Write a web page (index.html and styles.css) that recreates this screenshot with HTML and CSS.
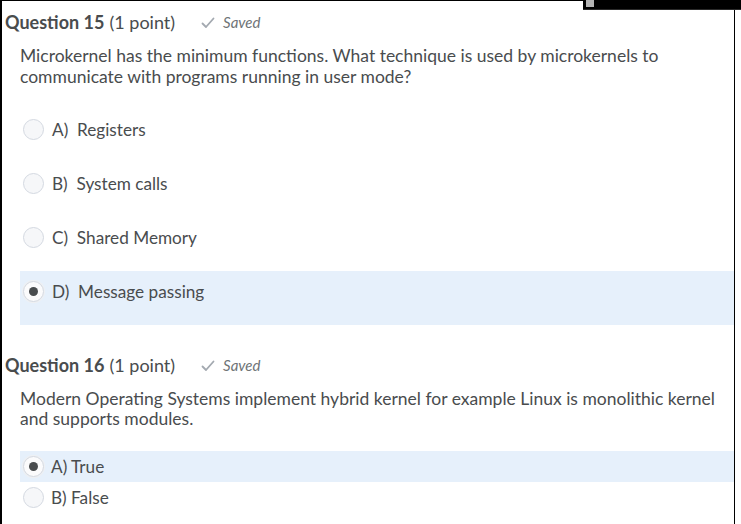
FILE: index.html
```html
<!DOCTYPE html>
<html>
<head>
<meta charset="utf-8">
<link rel="stylesheet" href="styles.css">
</head>
<body>
<div class="frame">
  <div class="topbar"><span class="topbar-knob"></span></div>

  <section class="question">
    <h2 class="q-head"><span class="q-num">Question 15</span> <span class="q-pts">(1 point)</span>
      <span class="saved"><svg class="check" width="14" height="12" viewBox="0 0 14 12"><path d="M1.5 6.5 L5 10 L12.5 1.5" fill="none" stroke="#a3a9b0" stroke-width="1.8" stroke-linecap="round" stroke-linejoin="round"/></svg><em>Saved</em></span>
    </h2>
    <p class="q-text">Microkernel has the minimum functions. What technique is used by microkernels to communicate with programs running in user mode?</p>
    <ul class="opts tall">
      <li class="opt"><span class="radio"></span><span class="lbl">A)&nbsp; Registers</span></li>
      <li class="opt"><span class="radio"></span><span class="lbl">B)&nbsp; System calls</span></li>
      <li class="opt"><span class="radio"></span><span class="lbl">C)&nbsp; Shared Memory</span></li>
      <li class="opt sel"><span class="radio on"></span><span class="lbl">D)&nbsp; Message passing</span></li>
    </ul>
  </section>

  <section class="question q2">
    <h2 class="q-head"><span class="q-num">Question 16</span> <span class="q-pts">(1 point)</span>
      <span class="saved"><svg class="check" width="14" height="12" viewBox="0 0 14 12"><path d="M1.5 6.5 L5 10 L12.5 1.5" fill="none" stroke="#a3a9b0" stroke-width="1.8" stroke-linecap="round" stroke-linejoin="round"/></svg><em>Saved</em></span>
    </h2>
    <p class="q-text">Modern Operating Systems implement hybrid kernel for example Linux is monolithic kernel and supports modules.</p>
    <ul class="opts short">
      <li class="opt sel"><span class="radio on"></span><span class="lbl">A) True</span></li>
      <li class="opt"><span class="radio"></span><span class="lbl">B) False</span></li>
    </ul>
  </section>
</div>
</body>
</html>
```

FILE: styles.css
```css
* { box-sizing: border-box; }
html, body { margin: 0; padding: 0; background: #fff; }
body {
  font-family: Lato, "Open Sans", sans-serif;
  color: #494c4e;
  width: 741px;
  height: 524px;
  overflow: hidden;
}
.frame {
  position: relative;
  width: 735px;
  height: 524px;
  border-top: 1px solid #000;
  border-left: 2px solid #000;
  border-right: 1px solid #000;
}
.topbar {
  position: absolute;
  top: -1px;
  left: 581px;
  width: 158px;
  height: 10px;
  background: #000;
  border-bottom: 1px solid #2a2a2a;
}
.topbar-knob {
  position: absolute;
  left: 3px;
  top: 0;
  width: 8px;
  height: 7px;
  background: #b4b4b4;
}
.question { padding-top: 9px; }
.q2 { padding-top: 28px; }
.q-head {
  margin: 0;
  padding-left: 3px;
  font-size: 18px;
  line-height: 24px;
  font-weight: 400;
  display: flex;
  align-items: center;
}
.q-num { font-weight: 700; }
.q-pts { margin-left: 5px; }
.saved {
  display: inline-flex;
  align-items: center;
  margin-left: 26px;
  font-size: 15px;
  color: #6e7376;
}
.saved em { margin-left: 8px; }
.check { display: block; margin-top: 1px; }
.q-text {
  margin: 11px 0 0 18px;
  padding-right: 8px;
  font-size: 17.5px;
  line-height: 21px;
}
.q2 .q-text { line-height: 20px; margin-top: 12px; }
.opts { list-style: none; margin: 0; padding: 0 0 0 18px; }
.tall { margin-top: 22px; }
.tall .opt { height: 54px; padding-top: 10px; align-items: flex-start; }
.short { margin-top: 22px; }
.short .opt { height: 31px; align-items: center; }
.opt {
  display: flex;
  padding-left: 3px;
  font-size: 17.2px;
  line-height: 22px;
}
.opt.sel { background: #e6f0fb; }
.radio {
  width: 21px;
  height: 21px;
  border-radius: 50%;
  border: 1px solid #d4d9e1;
  background: #f6f7f9;
  flex: none;
  position: relative;
  margin-right: 8px;
}
.short .radio { margin-right: 7px; }
.radio.on { background: #fbfbfc; box-shadow: 0 0 0 1px #eef0f3; }
.radio.on::after {
  content: "";
  position: absolute;
  left: 5px;
  top: 5px;
  width: 9px;
  height: 9px;
  border-radius: 50%;
  background: #494c4e;
}
```
